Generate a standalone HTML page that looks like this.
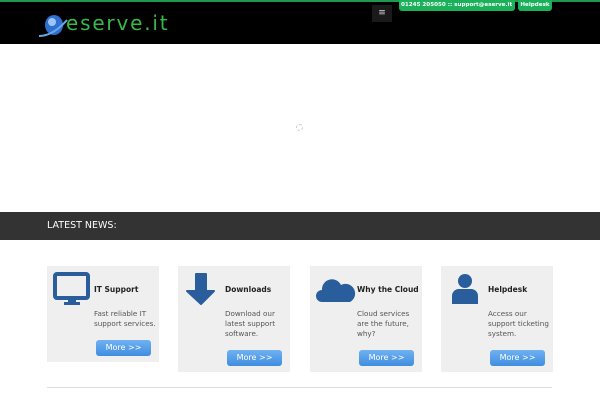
<!DOCTYPE html>
<html><head><style>
*{margin:0;padding:0;box-sizing:border-box}
body{width:600px;height:400px;overflow:hidden;background:#fff;font-family:"DejaVu Sans","Liberation Sans",sans-serif;position:relative}
.hdr{position:absolute;left:0;top:0;width:600px;height:44px;background:#000;border-top:2px solid #1e9a4e}
.logo{position:absolute;left:66px;top:9px;font-size:20px;color:#39b84a;letter-spacing:1.8px;font-family:"DejaVu Sans",sans-serif}
.tag{position:absolute;top:-2px;height:11px;background:#1bb15a;color:#fff;font-size:5.6px;font-weight:bold;line-height:10px;padding:0 2px;border-radius:0 0 3px 3px;white-space:nowrap}
.menu{position:absolute;left:372px;top:3px;width:20px;height:17px;background:#1a1a1a;color:#ddd;font-size:9px;text-align:center;line-height:17px}
.bar{position:absolute;left:0;top:212px;width:600px;height:28px;background:#333;color:#fff;font-size:9.5px;line-height:28px;padding-left:47px}
.box{position:absolute;top:266px;width:112px;background:#efefef}
.box h4{position:absolute;left:47px;top:19px;font-size:7.5px;color:#222;white-space:nowrap}
.box p{position:absolute;left:47px;top:43px;font-size:7.2px;line-height:10px;color:#555;width:66px}
.btn{position:absolute;left:49px;width:55px;height:16px;border-radius:3px;background:linear-gradient(#6fb1f2,#3f8de0);color:#fff;font-size:8px;text-align:center;line-height:16px}
.ic{position:absolute;left:6px;top:6px}
</style></head><body>
<div class="hdr">
<svg style="position:absolute;left:38px;top:10px" width="30" height="28"><ellipse cx="16" cy="13" rx="9" ry="10" fill="#2f6fd0"/><ellipse cx="14" cy="10" rx="4" ry="4" fill="#9cc6f5"/><path d="M1 24 Q15 24 29 8" stroke="#6aa8e8" stroke-width="2" fill="none"/></svg>
<div class="logo">eserve.it</div>
<div class="menu">≡</div>
<div class="tag" style="left:399px;width:116px">01245 205050 :: support@eserve.it</div>
<div class="tag" style="left:518px;width:34px;text-align:center">Helpdesk</div>
</div>
<div class="bar">LATEST NEWS:</div>
<div class="box" style="left:47px;height:96px">
<svg class="ic" width="38" height="34"><rect x="2" y="2" width="33" height="24" rx="2" fill="none" stroke="#2a5d9c" stroke-width="4"/><rect x="15" y="27" width="8" height="4" fill="#2a5d9c"/><rect x="11" y="30" width="16" height="3" fill="#2a5d9c"/></svg>
<h4>IT Support</h4><p>Fast reliable IT support services.</p><div class="btn" style="top:74px">More &gt;&gt;</div></div>
<div class="box" style="left:178px;height:106px">
<svg class="ic" width="34" height="34"><path d="M12 2h10v17h8L17 32 3 19h9z" fill="#2a5d9c" stroke="#2a5d9c" stroke-linejoin="round" stroke-width="2"/></svg>
<h4>Downloads</h4><p>Download our latest support software.</p><div class="btn" style="top:84px">More &gt;&gt;</div></div>
<div class="box" style="left:310px;height:106px">
<svg class="ic" width="40" height="34" style="left:6px;top:8px"><path d="M6 28a6 6 0 0 1 0-12a10 10 0 0 1 19-5a8 8 0 0 1 9 17z" fill="#2a5d9c"/></svg>
<h4>Why the Cloud</h4><p>Cloud services are the future, why?</p><div class="btn" style="top:84px">More &gt;&gt;</div></div>
<div class="box" style="left:441px;height:106px">
<svg class="ic" width="34" height="34" style="left:8px"><circle cx="16" cy="9" r="7" fill="#2a5d9c"/><path d="M3 32v-8a7 7 0 0 1 7-7h12a7 7 0 0 1 7 7v8z" fill="#2a5d9c"/></svg>
<h4>Helpdesk</h4><p>Access our support ticketing system.</p><div class="btn" style="top:84px">More &gt;&gt;</div></div>
<div style="position:absolute;left:47px;top:387px;width:505px;height:1px;background:#ddd"></div>
<div style="position:absolute;left:296px;top:124px;width:7px;height:7px;border:1px dashed #ccc;border-radius:50%"></div>
</body></html>
